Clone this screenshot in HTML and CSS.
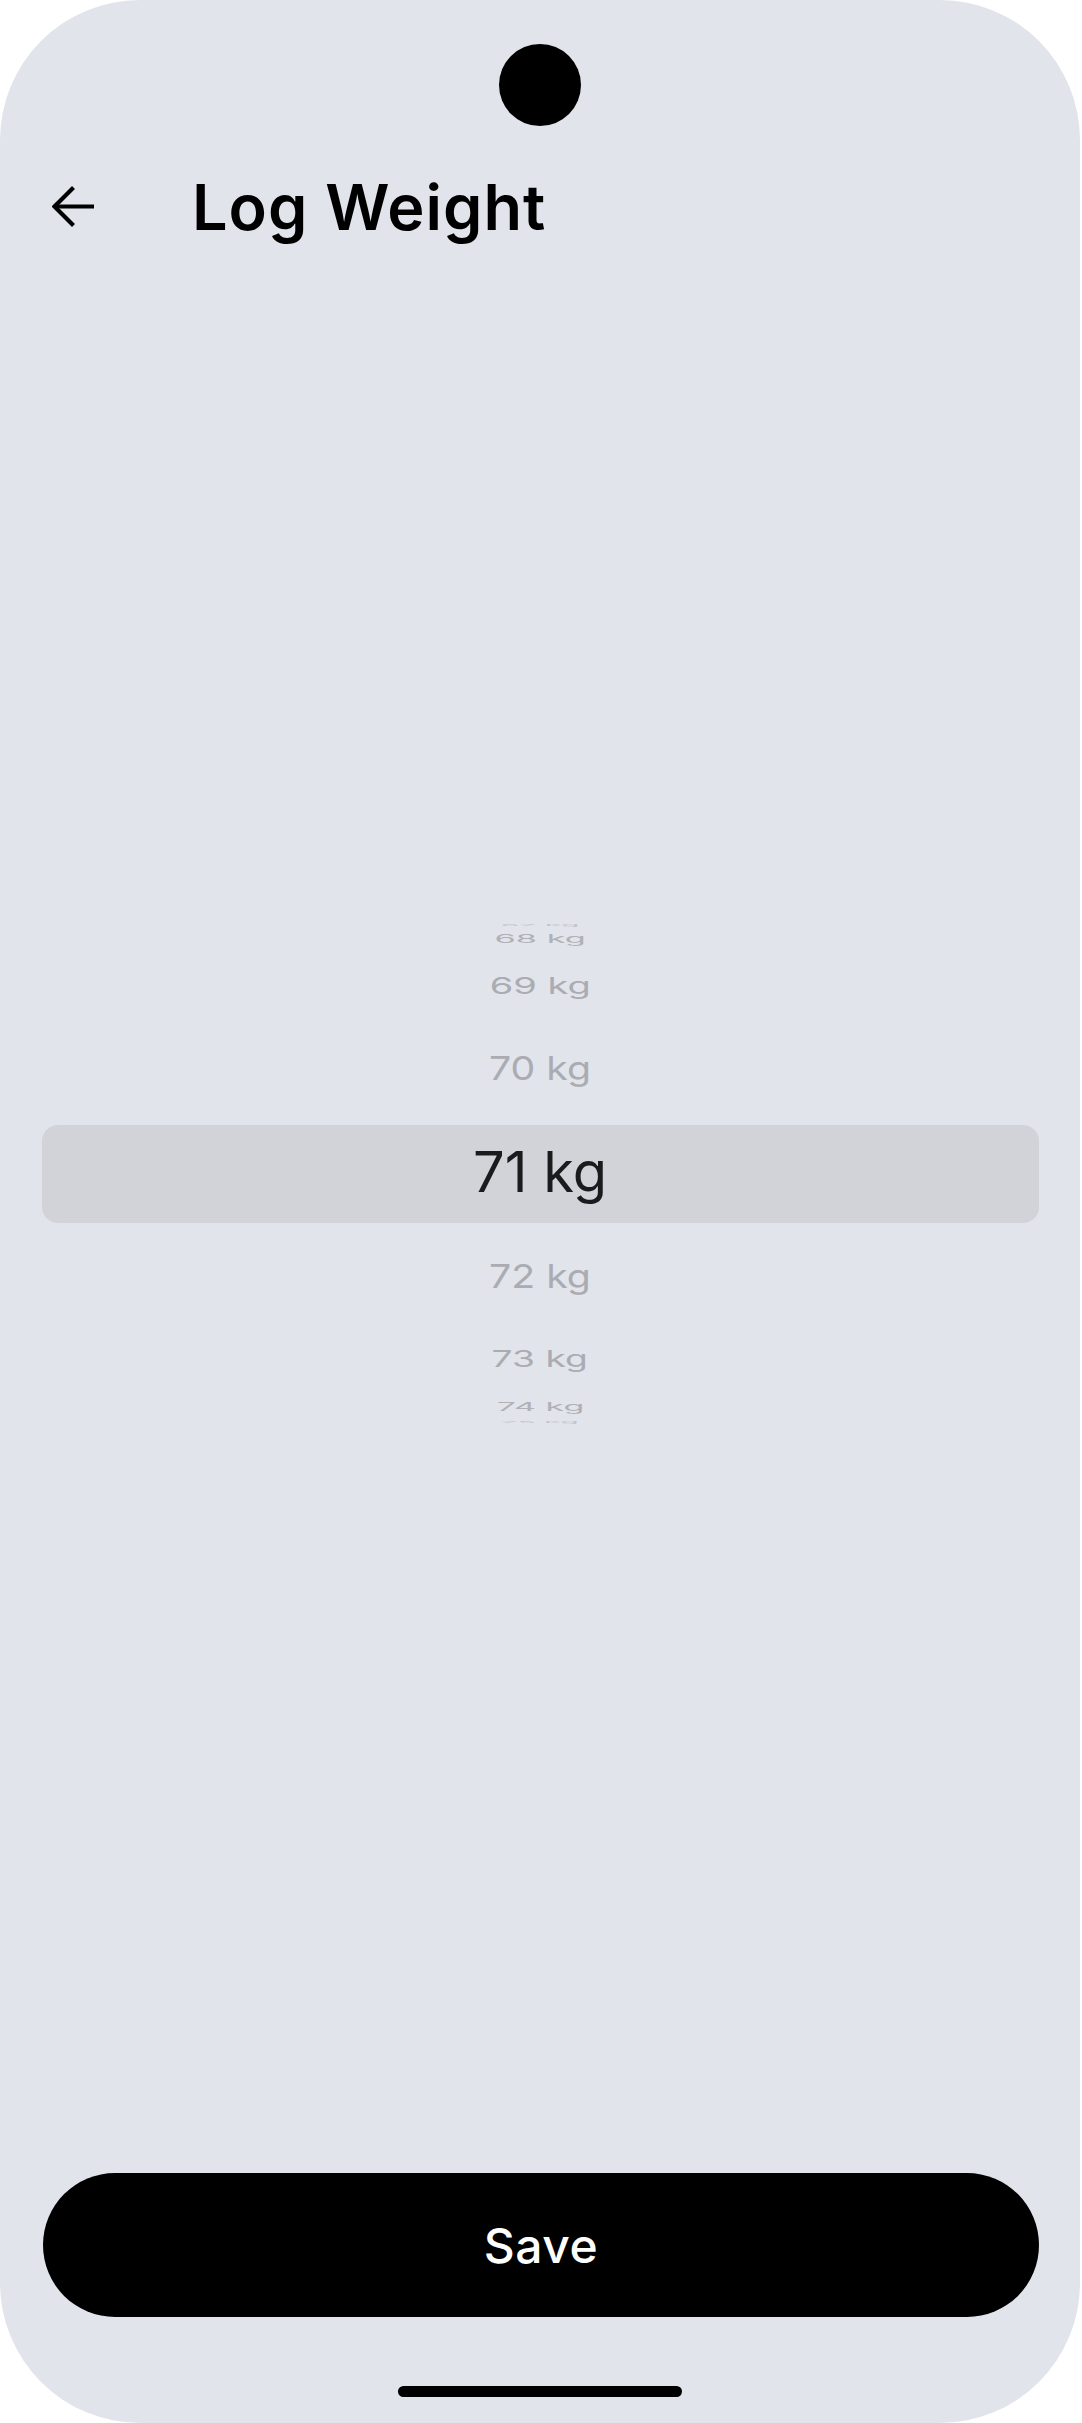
FILE: index.html
```html
<!DOCTYPE html>
<html lang="en">
<head>
<meta charset="utf-8">
<title>Log Weight</title>
<link rel="stylesheet" href="styles.css">
</head>
<body>
<div class="phone">
  <div class="camera"></div>
  <header class="header">
    <button class="back" aria-label="Back">
      <svg width="44" height="44" viewBox="0 0 44 44" fill="none" stroke="#000" stroke-width="4.2" stroke-linecap="butt" stroke-linejoin="miter">
        <path d="M42 21.5H5"/>
        <path d="M21.5 2.5L2.5 21.5L21.5 40.5"/>
      </svg>
    </button>
    <h1 class="title">Log Weight</h1>
  </header>

  <div class="picker">
    <div class="highlight"></div>
    <div class="item pos-m4">67 kg</div>
    <div class="item pos-m3">68 kg</div>
    <div class="item pos-m2">69 kg</div>
    <div class="item pos-m1">70 kg</div>
    <div class="item selected">71 kg</div>
    <div class="item pos-p1">72 kg</div>
    <div class="item pos-p2">73 kg</div>
    <div class="item pos-p3">74 kg</div>
    <div class="item pos-p4">75 kg</div>
  </div>

  <div class="spacer"></div>

  <button class="save">Save</button>
  <div class="home-indicator"></div>
</div>
</body>
</html>
```

FILE: styles.css
```css
* {
  box-sizing: border-box;
}

html, body {
  margin: 0;
  padding: 0;
  background: #ffffff;
}

body {
  font-family: "Inter", "Open Sans", sans-serif;
}

.phone {
  width: 1080px;
  height: 2423px;
  background: #e1e4eb;
  border-radius: 140px;
  display: flex;
  flex-direction: column;
  overflow: hidden;
}

.camera {
  width: 82px;
  height: 82px;
  border-radius: 50%;
  background: #000;
  margin: 44px auto 0;
  flex-shrink: 0;
}

.header {
  display: flex;
  align-items: center;
  height: 80px;
  margin-top: 41px;
  padding-left: 52px;
  flex-shrink: 0;
}

.back {
  width: 44px;
  height: 44px;
  padding: 0;
  border: 0;
  background: transparent;
  display: flex;
}

.title {
  margin: 0 0 0 96px;
  font-size: 63px;
  font-weight: 600;
  color: #000;
  letter-spacing: 1px;
  line-height: 1;
}

/* Wheel picker: all rows share one grid cell, each projected onto a drum */
.picker {
  margin-top: 673px;
  height: 504px;
  display: grid;
  place-items: center;
  overflow: hidden;
  flex-shrink: 0;
}

.highlight {
  grid-area: 1 / 1;
  justify-self: stretch;
  margin: 4px 41px 0 42px;
  height: 98px;
  background: #d2d3d9;
  border-radius: 16px;
}

.item {
  grid-area: 1 / 1;
  font-size: 40px;
  line-height: 1;
  color: #abacb1;
  white-space: nowrap;
}

.item.selected {
  font-size: 56px;
  color: #1b1b1d;
}

.pos-m1 { transform: translateY(-104px) scale(0.98, 0.83); }
.pos-p1 { transform: translateY(104px) scale(0.98, 0.83); }
.pos-m2 { transform: translateY(-186px) scale(0.95, 0.58); }
.pos-p2 { transform: translateY(187px) scale(0.93, 0.57); }
.pos-m3 { transform: translateY(-233px) scale(0.86, 0.29); color: #b0b1b6; }
.pos-p3 { transform: translateY(235px) scale(0.85, 0.3); color: #b0b1b6; }
.pos-m4 { transform: translateY(-247px) scale(0.76, 0.06); color: #c4c5ca; }
.pos-p4 { transform: translateY(250px) scale(0.76, 0.06); color: #c4c5ca; }

.spacer {
  flex: 1;
}

.save {
  flex-shrink: 0;
  margin: 0 41px 0 43px;
  height: 144px;
  border: 0;
  border-radius: 72px;
  background: #000;
  color: #fff;
  font-family: "Inter", "Open Sans", sans-serif;
  font-size: 48px;
  font-weight: 500;
  letter-spacing: 0.5px;
  padding: 0;
}

.home-indicator {
  flex-shrink: 0;
  width: 284px;
  height: 11px;
  border-radius: 6px;
  background: #000;
  margin: 69px auto 26px;
}
```
